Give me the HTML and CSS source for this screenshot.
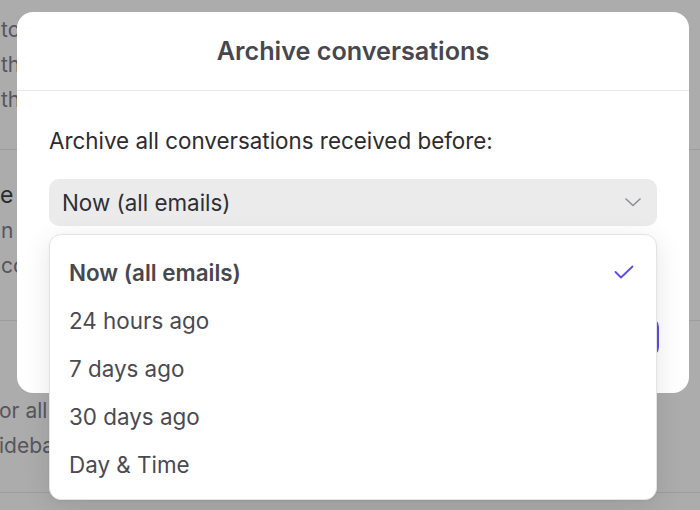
FILE: index.html
```html
<!DOCTYPE html>
<html lang="en">
<head>
<meta charset="utf-8">
<title>Archive conversations</title>
<link rel="stylesheet" href="styles.css">
</head>
<body>
<div class="page">
  <section class="bg-section first">
    <p class="bg-line">to</p>
    <p class="bg-line">th</p>
    <p class="bg-line">th</p>
  </section>
  <section class="bg-section second">
    <p class="bg-heading">e</p>
    <p class="bg-line">n</p>
    <p class="bg-line">co</p>
  </section>
  <section class="bg-section third">
    <p class="bg-line shift">or all</p>
    <p class="bg-line shift">ideba</p>
  </section>
</div>

<div class="modal" role="dialog" aria-labelledby="modal-title">
  <header class="modal-header">
    <h2 id="modal-title" class="modal-title">Archive conversations</h2>
  </header>
  <div class="modal-body">
    <p class="field-label">Archive all conversations received before:</p>
    <div class="select-wrap">
      <div class="select">
        <span class="select-value">Now (all emails)</span>
        <svg class="chevron" width="16" height="9" viewBox="0 0 16 9" aria-hidden="true">
          <path d="M1 1 L8 7.5 L15 1" fill="none" stroke="currentColor" stroke-width="1.6" stroke-linecap="round" stroke-linejoin="round"/>
        </svg>
      </div>
      <ul class="menu" role="listbox">
        <li class="menu-item selected" role="option" aria-selected="true">
          <span>Now (all emails)</span>
          <svg class="check" width="20" height="14" viewBox="0 0 20 14" aria-hidden="true">
            <path d="M1.5 7 L7 12.5 L18.5 1.5" fill="none" stroke="currentColor" stroke-width="1.9" stroke-linecap="round" stroke-linejoin="round"/>
          </svg>
        </li>
        <li class="menu-item" role="option">24 hours ago</li>
        <li class="menu-item" role="option">7 days ago</li>
        <li class="menu-item" role="option">30 days ago</li>
        <li class="menu-item" role="option">Day &amp; Time</li>
      </ul>
    </div>
  </div>
  <footer class="modal-footer">
    <button class="btn-primary" type="button"></button>
  </footer>
</div>
</body>
</html>
```

FILE: styles.css
```css
* { box-sizing: border-box; }

html, body {
  margin: 0;
  padding: 0;
}

body {
  width: 700px;
  height: 510px;
  overflow: hidden;
  background: #acacad;
  font-family: Inter, "Noto Sans", "Liberation Sans", sans-serif;
  position: relative;
}

/* background page (dimmed) */
.page {
  display: flex;
  flex-direction: column;
}

.bg-section {
  border-bottom: 1px solid #9d9d9f;
  display: flex;
  flex-direction: column;
}

.bg-section.first {
  height: 150px;
  padding-top: 12px;
}

.bg-section.second {
  height: 171px;
  padding-top: 30px;
}

.bg-section.third {
  height: 172px;
  padding-top: 72px;
}

.bg-line {
  margin: 0;
  padding-left: 1px;
  font-size: 21px;
  line-height: 35px;
  color: #56565c;
  white-space: nowrap;
}

.bg-line.shift {
  margin-left: -2px;
}

.bg-heading {
  margin: 0 0 3px 0;
  font-size: 23px;
  line-height: 30px;
  color: #2a2a2e;
}

/* modal */
.modal {
  position: absolute;
  left: 17px;
  top: 12px;
  width: 672px;
  height: 381px;
  background: #ffffff;
  border-radius: 16px;
  display: flex;
  flex-direction: column;
}

.modal-header {
  height: 79px;
  border-bottom: 1px solid #e9e9eb;
  display: flex;
  align-items: center;
  justify-content: center;
}

.modal-title {
  margin: 0;
  font-size: 25.2px;
  font-weight: 600;
  color: #47474f;
}

.modal-body {
  padding: 36px 32px 0 32px;
}

.field-label {
  margin: 0 0 24px 0;
  font-size: 22.4px;
  line-height: 28px;
  color: #2c2c31;
}

.select-wrap {
  position: relative;
}

.select {
  height: 47px;
  background: #ebebec;
  border-radius: 10px;
  display: flex;
  align-items: center;
  justify-content: space-between;
  padding: 0 16px 0 13px;
}

.select-value {
  font-size: 22.4px;
  color: #2f2f35;
}

.chevron {
  color: #8e8e96;
  display: block;
}

.menu {
  position: absolute;
  left: 0;
  right: 0;
  top: 55px;
  height: 266px;
  margin: 0;
  padding: 13px 0 12px 0;
  list-style: none;
  background: #ffffff;
  border: 1px solid #e4e4e6;
  border-radius: 12px;
  box-shadow: 0 6px 28px rgba(0, 0, 0, 0.10), 0 1px 3px rgba(0, 0, 0, 0.04);
  z-index: 2;
}

.menu-item {
  height: 48px;
  display: flex;
  align-items: center;
  justify-content: space-between;
  padding: 0 22px 0 19px;
  font-size: 22.4px;
  color: #4a4a52;
}

.menu-item.selected {
  font-weight: 600;
  color: #47474f;
}

.check {
  color: #5b50e2;
  display: block;
}

.modal-footer {
  margin-top: auto;
  padding: 0 30px 36px 32px;
  display: flex;
  justify-content: flex-end;
}

.btn-primary {
  width: 110px;
  height: 40px;
  border: none;
  border-radius: 10px;
  background: #5b50e2;
}
```
